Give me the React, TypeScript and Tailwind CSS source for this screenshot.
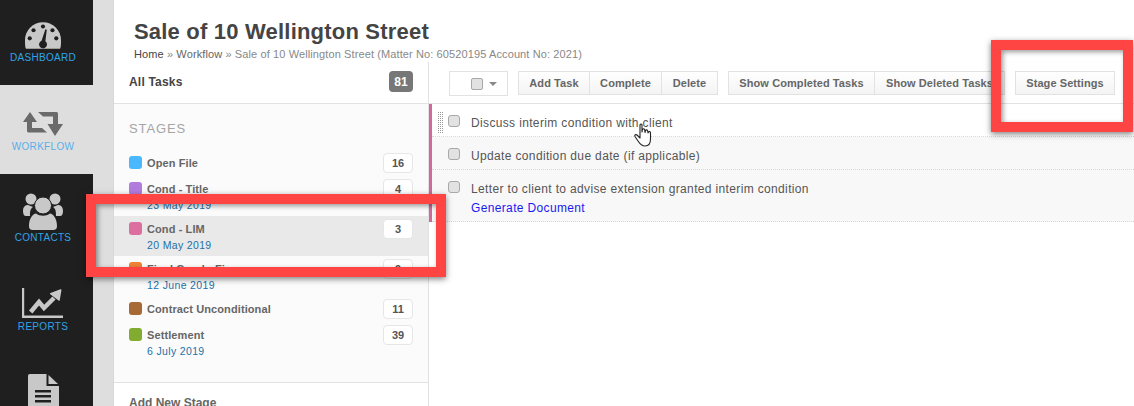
const stages = [
  { name: "Open File", color: "bg-[#4ab8fd]", count: "16" },
  { name: "Cond - Title", color: "bg-[#b27cdc]", count: "4", date: "23 May 2019" },
  { name: "Cond - LIM", color: "bg-[#dc6ea0]", count: "3", date: "20 May 2019", active: true },
  { name: "Final Cond - Finance", color: "bg-[#f08238]", count: "9", date: "12 June 2019" },
  { name: "Contract Unconditional", color: "bg-[#a86a34]", count: "11" },
  { name: "Settlement", color: "bg-[#82ac30]", count: "39", date: "6 July 2019" },
];

function GaugeIcon() {
  return (
    <svg width="36" height="29" viewBox="0 0 38 30">
      <path d="M1 29 C0 27 0 24 0 20 A19 19 0 0 1 38 20 C38 24 38 27 37 29 Z" fill="#c8c8c8" />
      <g fill="#1f1f1f">
        <circle cx="19" cy="5.5" r="2.2" />
        <circle cx="9" cy="9.5" r="2.2" />
        <circle cx="29" cy="9.5" r="2.2" />
        <circle cx="5" cy="18" r="2.2" />
        <circle cx="33" cy="18" r="2.2" />
        <path d="M21.5 8.5 L23 9 L21.5 21 A4.2 4.2 0 1 1 17.5 20.5 Z" />
      </g>
    </svg>
  );
}

function RepeatIcon() {
  return (
    <svg width="40" height="24" viewBox="0 0 40 24" fill="#6a6a6a">
      <path d="M7 0 L14 10 L9 10 L9 16 L19 16 L24 20.5 L6 20.5 C4.5 20.5 4 20 4 18.5 L4 10 L0 10 Z" />
      <path d="M15 0 L33 0 C34.5 0 35 .5 35 2 L35 12 L40 12 L32 24 L24.5 12 L30 12 L30 4.5 L20 4.5 Z" />
    </svg>
  );
}

function UsersIcon() {
  return (
    <svg width="40" height="37" viewBox="0 0 40 37" fill="#c8c8c8">
      <circle cx="8" cy="6" r="5.5" />
      <circle cx="32" cy="6" r="5.5" />
      <path d="M0 18 C0 13 3 12 5 12 L10 14 C7 16 7 19 7 23 L3 23 C1 23 0 21 0 18 Z" />
      <path d="M40 18 C40 13 37 12 35 12 L30 14 C33 16 33 19 33 23 L37 23 C39 23 40 21 40 18 Z" />
      <circle cx="20" cy="12.5" r="8.5" stroke="#1f1f1f" strokeWidth="1" />
      <path d="M6 33 C6 25 10 21 13 20.5 C17 23.5 23 23.5 27 20.5 C30 21 34 25 34 33 C34 35.5 33 37 30 37 L10 37 C7 37 6 35.5 6 33 Z" />
    </svg>
  );
}

function ChartIcon() {
  return (
    <svg width="42" height="30" viewBox="0 0 42 30" fill="#c8c8c8">
      <path d="M0 0 L2.2 0 L2.2 27.5 L41 27.5 L41 30 L0 30 Z" />
      <path d="M8.7 24 L17 14 L22 20 L32 10" fill="none" stroke="#c8c8c8" strokeWidth="4.5" />
      <path d="M28.7 5.7 L38.7 2 L37 12 Z" stroke="#c8c8c8" strokeWidth="1.5" strokeLinejoin="round" />
    </svg>
  );
}

function FileIcon() {
  return (
    <svg width="31" height="32" viewBox="0 0 31 32">
      <path d="M2 0 H18.5 V12 H31 V32 H0 V2 C0 .7 .7 0 2 0 Z" fill="#c8c8c8" />
      <path d="M20.5 1 L30 10 L20.5 10 Z" fill="#c8c8c8" />
      <path d="M7 16 H23 V18.5 H7 Z M7 21 H23 V23.5 H7 Z M7 26 H23 V28.5 H7 Z" fill="#1f1f1f" />
    </svg>
  );
}

function HandCursor() {
  return (
    <svg width="19" height="24" viewBox="0 0 19 24">
      <path
        d="M6 2 C6 .7 8 .7 8 2 L8 9 L8.5 6.5 C9 5.5 10.5 5.5 10.7 6.8 L11 9.5 L11.5 7.5 C12 6.5 13.5 6.7 13.7 8 L14 10 L14.5 9 C15 8.2 16.5 8.5 16.5 10 L16.5 16 C16.5 20 14.5 23 11 23 C7.5 23 6 21 4 18 L1 13.5 C.3 12 2 11 3 12 L6 15 Z"
        fill="#ffffff"
        stroke="#222222"
        strokeWidth="1.1"
        strokeLinejoin="round"
      />
    </svg>
  );
}

function NavItem({ icon, label, box, active, labelGap }: { icon: React.ReactNode; label?: string; box: string; active?: boolean; labelGap?: string }) {
  return (
    <div className={`flex w-[93px] flex-col items-center overflow-hidden pr-[7px] ${box} ${active ? "bg-[#dedede] text-[#5aaee8]" : "bg-[#1f1f1f] text-[#2fa4e7]"}`}>
      <div className="flex h-[37px] shrink-0 items-end">{icon}</div>
      {label && <div className={`text-[10px] leading-3 tracking-[0.3px] ${labelGap}`}>{label}</div>}
    </div>
  );
}

function TaskRow({ text, link, grey, tall }: { text: string; link?: string; grey?: boolean; tall?: boolean }) {
  return (
    <div className={`flex border-b border-dotted border-[#d8d8d8] pl-[16px] ${tall ? "h-[52px]" : "h-[33px]"} ${grey ? "bg-[#f8f8f8]" : "bg-white"}`}>
      <span className="mt-[11px] h-3 w-3 rounded-[3px] border border-[#a8a8a8] bg-[#e2e2e2]" />
      <div className="ml-[11px] mt-[11px] text-[12px] leading-4 tracking-[0.35px] text-[#555]">
        <div>{text}</div>
        {link && <div className="mt-[3px] text-[#1a1af0]">{link}</div>}
      </div>
    </div>
  );
}

function ToolButton({ label, w, joined }: { label: string; w: string; joined?: boolean }) {
  return (
    <div className={`flex h-6 items-center justify-center border border-[#e2e2e2] bg-gradient-to-b from-white to-[#f4f4f4] text-[11px] font-bold tracking-[0.08px] text-[#666] ${w} ${joined ? "-ml-px" : ""}`}>
      {label}
    </div>
  );
}

export default function App() {
  return (
    <div className="relative flex h-[406px] w-[1134px] overflow-hidden bg-white font-['Liberation_Sans',Arial,sans-serif]">
      {/* nav column */}
      <div className="w-[114px] shrink-0 border-r border-[#d8d8d8] bg-[#dedede]">
        <NavItem icon={<GaugeIcon />} label="DASHBOARD" box="h-[85px] pt-[13px]" labelGap="mt-[2px]" />
        <NavItem icon={<RepeatIcon />} label="WORKFLOW" box="h-[89px] pt-[14px]" labelGap="mt-[5px]" active />
        <NavItem icon={<UsersIcon />} label="CONTACTS" box="h-[89px] pt-[19px]" labelGap="mt-[2px]" />
        <NavItem icon={<ChartIcon />} label="REPORTS" box="h-[89px] pt-[18px]" labelGap="mt-[3px]" />
        <NavItem icon={<FileIcon />} box="h-[54px] pt-[17px]" />
      </div>

      <div className="flex min-w-0 flex-1 flex-col">
        {/* heading */}
        <div className="h-[62px] shrink-0 pl-[20px] pt-[19px]">
          <h1 className="text-[22px] font-bold leading-[26px] tracking-[0.2px] text-[#444]">Sale of 10 Wellington Street</h1>
          <div className="mt-[2px] text-[11px] leading-[14px] tracking-[0.11px] text-[#888]">
            <span className="text-[#444]">Home</span> » <span className="text-[#666]">Workflow</span> » Sale of 10 Wellington Street (Matter No: 60520195 Account No: 2021)
          </div>
        </div>

        <div className="flex min-h-0 flex-1">
          {/* stages */}
          <div className="w-[315px] shrink-0 border-r border-[#e2e2e2]">
            <div className="flex h-[42px] items-center justify-between border-b border-[#e2e2e2] px-[15px] pb-[2px]">
              <span className="text-[12px] font-bold tracking-[0.2px] text-[#444]">All Tasks</span>
              <span className="flex h-[21px] w-6 items-center justify-center rounded bg-[#777] text-[12px] font-bold text-white">81</span>
            </div>
            <div className="h-[279px] border-b border-[#e2e2e2] bg-[#fbfbfb]">
              <div className="h-[46px] pl-[15px] pt-[17px] text-[13px] leading-4 tracking-[0.9px] text-[#a5a5a5]">STAGES</div>
              {stages.map((s) => (
                <div key={s.name} className={`flex justify-between px-[15px] ${s.date ? "h-10" : "h-[26px]"} ${s.active ? "bg-[#e9e9e9]" : ""}`}>
                  <div className="flex items-start">
                    <span className={`mt-[6px] h-[13px] w-[13px] rounded-[3px] ${s.color}`} />
                    <div className="ml-[5px] mt-[7px]">
                      <div className="text-[11px] font-bold leading-3 tracking-[0.1px] text-[#666]">{s.name}</div>
                      {s.date && <div className="mt-1 text-[10.5px] leading-3 tracking-[0.35px] text-[#1d70a8]">{s.date}</div>}
                    </div>
                  </div>
                  <span className="mt-[3px] flex h-5 w-[30px] items-center justify-center rounded border border-[#e6e6e6] bg-white text-[11px] font-bold text-[#555]">{s.count}</span>
                </div>
              ))}
            </div>
            <div className="pl-[15px] pt-[12px] text-[12px] font-bold leading-4 text-[#666]">Add New Stage</div>
          </div>

          {/* tasks */}
          <div className="min-w-0 flex-1">
            <div className="flex h-[42px] items-start border-b border-[#e2e2e2] pl-[20px] pt-[9px]">
              <div className="flex h-[25px] w-[59px] items-center justify-end gap-[6px] border border-[#e2e2e2] bg-white pr-[10px]">
                <span className="h-3 w-3 rounded-[2px] border border-[#a8a8a8] bg-[#e2e2e2]" />
                <span className="h-0 w-0 border-x-[4px] border-t-[4px] border-x-transparent border-t-[#888]" />
              </div>
              <div className="ml-[10px] flex">
                <ToolButton label="Add Task" w="w-[72px]" />
                <ToolButton label="Complete" w="w-[73px]" joined />
                <ToolButton label="Delete" w="w-[57px]" joined />
              </div>
              <div className="ml-[10px] flex">
                <ToolButton label="Show Completed Tasks" w="w-[147px]" />
                <ToolButton label="Show Deleted Tasks" w="w-[131px]" joined />
              </div>
              <div className="ml-[10px]">
                <ToolButton label="Stage Settings" w="w-[100px]" />
              </div>
            </div>
            <div className="border-l-[3px] border-[#cf6a9c]">
              <TaskRow text="Discuss interim condition with client" />
              <TaskRow text="Update condition due date (if applicable)" grey />
              <TaskRow text="Letter to client to advise extension granted interim condition" link="Generate Document" grey tall />
            </div>
          </div>
        </div>
      </div>

      {/* drag handle dots, cursor */}
      <div className="absolute left-[438px] top-[112px] grid grid-cols-3 gap-px">
        {Array.from({ length: 33 }).map((_, i) => (
          <span key={i} className="h-px w-px bg-[#999]" />
        ))}
      </div>
      <div className="absolute left-[634px] top-[123px]"><HandCursor /></div>

      {/* red callouts */}
      <div className="absolute left-[86px] top-[194px] h-[83px] w-[360px] border-[10px] border-[#ff4444] shadow-[0_2px_6px_rgba(0,0,0,0.5),inset_2px_2px_5px_rgba(0,0,0,0.4)]" />
      <div className="absolute left-[991px] top-[40px] h-[92px] w-[142px] border-[10px] border-[#ff4444] shadow-[0_2px_6px_rgba(0,0,0,0.5),inset_2px_2px_5px_rgba(0,0,0,0.4)]" />
    </div>
  );
}
